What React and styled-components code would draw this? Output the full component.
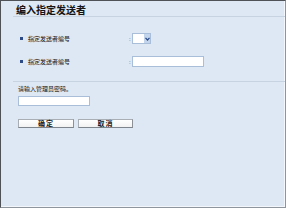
import React from "react";
import styled, { createGlobalStyle } from "styled-components";

const Global = createGlobalStyle`
  html, body { margin: 0; padding: 0; background: #dde8f4; }
  * { box-sizing: border-box; }
`;

const Frame = styled.div`
  width: 286px;
  height: 208px;
  background: #dde8f4;
  border-top: 1px solid #4f5256;
  border-left: 1px solid #4f5256;
  border-right: 1px solid #8e959c;
  border-bottom: 1px solid #8e959c;
  box-shadow: inset -1px -1px 0 #f3f7fb;
  font-family: "Noto Sans CJK SC", "Liberation Sans", sans-serif;
  color: #1e1e1e;
  display: flex;
  flex-direction: column;
`;

const Header = styled.div`
  margin-left: 12px;
  padding: 3px 0 1px 3px;
  border-bottom: 1px solid #c7d3e1;
`;

const Title = styled.h1`
  margin: 0;
  font-size: 10px;
  line-height: 11px;
  font-weight: bold;
  color: #141414;
`;

const Section = styled.div`
  margin-left: 12px;
  padding: ${(p) => p.$pad};
  border-bottom: ${(p) => (p.$divider ? "1px solid #c7d3e1" : "none")};
  display: flex;
  flex-direction: column;
  gap: ${(p) => p.$gap || "0px"};
`;

const Row = styled.div`
  display: flex;
  align-items: center;
  height: 11px;
  padding-left: 7px;
`;

const Bullet = styled.span`
  width: 3px;
  height: 3px;
  background: #2c4b86;
  margin-right: 5px;
  flex: none;
`;

const Label = styled.span`
  width: 101px;
  font-size: 6px;
  line-height: 8px;
  color: #111;
  white-space: nowrap;
`;

const Colon = styled.span`
  width: 3px;
  font-size: 6px;
  line-height: 8px;
  color: #7f8a96;
`;

const SelectBox = styled.div`
  width: 19px;
  height: 11px;
  border: 1px solid #a8bed9;
  background: #fff;
  display: flex;
  justify-content: flex-end;
`;

const SelectArrow = styled.span`
  width: 6px;
  height: 100%;
  background: #c3d5ed;
  display: flex;
  align-items: center;
  justify-content: center;
`;

const TextBox = styled.div`
  width: ${(p) => p.$w}px;
  height: ${(p) => p.$h}px;
  border: 1px solid #a8bed9;
  background: #fff;
`;

const Hint = styled.div`
  font-size: 6px;
  line-height: 8px;
  color: #111;
  padding-left: 5px;
  white-space: nowrap;
`;

const Field = styled.div`
  padding-left: 5px;
  margin-top: ${(p) => p.$mt}px;
`;

const Buttons = styled.div`
  display: flex;
  gap: 4px;
  padding-left: 5px;
  margin-top: 13px;
`;

const Button = styled.button`
  width: ${(p) => p.$w}px;
  height: 9px;
  padding: 0;
  border: 1px solid #a9aeb4;
  border-bottom-color: #7e848b;
  border-right-color: #8c9197;
  background: linear-gradient(#ffffff, #f2f2f2);
  font-family: "Noto Sans CJK SC", "Liberation Sans", sans-serif;
  font-size: 7px;
  line-height: 7px;
  font-weight: bold;
  color: #1a1a1a;
  letter-spacing: 1px;
  display: flex;
  align-items: center;
  justify-content: center;
`;

export default function App() {
  return (
    <>
      <Global />
      <Frame>
        <Header>
          <Title>编入指定发送者</Title>
        </Header>
        <Section $pad="16px 0 14px 0" $gap="12px" $divider>
          <Row>
            <Bullet />
            <Label>指定发送者编号</Label>
            <Colon>:</Colon>
            <SelectBox>
              <SelectArrow>
                <svg width="5" height="4" viewBox="0 0 5 4">
                  <path d="M0.5 0.8 L2.5 3 L4.5 0.8" fill="none" stroke="#2a4a88" strokeWidth="1.2" />
                </svg>
              </SelectArrow>
            </SelectBox>
          </Row>
          <Row>
            <Bullet />
            <Label>指定发送者编号</Label>
            <Colon>:</Colon>
            <TextBox $w={72} $h={11} />
          </Row>
        </Section>
        <Section $pad="3px 0 0 0">
          <Hint>请输入管理员密码。</Hint>
          <Field $mt={3}>
            <TextBox $w={72} $h={10} />
          </Field>
          <Buttons>
            <Button $w={56}>确定</Button>
            <Button $w={55}>取消</Button>
          </Buttons>
        </Section>
      </Frame>
    </>
  );
}
